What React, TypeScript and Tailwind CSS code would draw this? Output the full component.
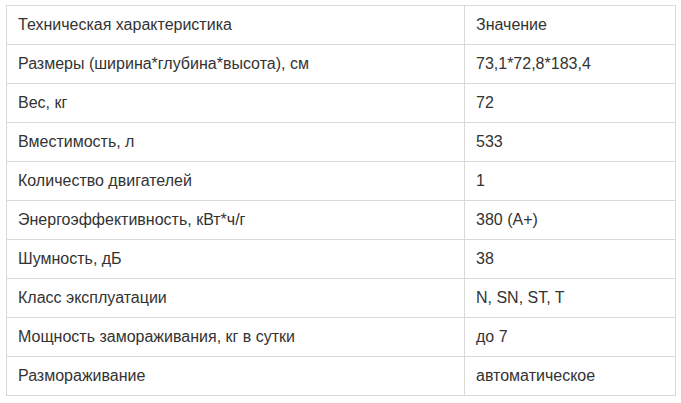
import React from 'react';

const rows: [string, string][] = [
  ['Техническая характеристика', 'Значение'],
  ['Размеры (ширина*глубина*высота), см', '73,1*72,8*183,4'],
  ['Вес, кг', '72'],
  ['Вместимость, л', '533'],
  ['Количество двигателей', '1'],
  ['Энергоэффективность, кВт*ч/г', '380 (A+)'],
  ['Шумность, дБ', '38'],
  ['Класс эксплуатации', 'N, SN, ST, T'],
  ['Мощность замораживания, кг в сутки', 'до 7'],
  ['Размораживание', 'автоматическое'],
];

const App = () => {
  return (
    <div className="bg-white w-[681px] h-[403px] pl-[6px] pt-[5px]" style={{ fontFamily: '"Liberation Sans", Arial, sans-serif' }}>
      <table className="border-collapse w-[670px] text-[16px] text-[#333333]">
        <tbody>
          {rows.map(([name, value], i) => (
            <tr key={i} className="h-[39px]">
              <td className="border border-[#d9d9d9] px-[11px] w-[458px] align-middle">{name}</td>
              <td className="border border-[#d9d9d9] px-[11px] align-middle">{value}</td>
            </tr>
          ))}
        </tbody>
      </table>
    </div>
  );
};

export default App;
